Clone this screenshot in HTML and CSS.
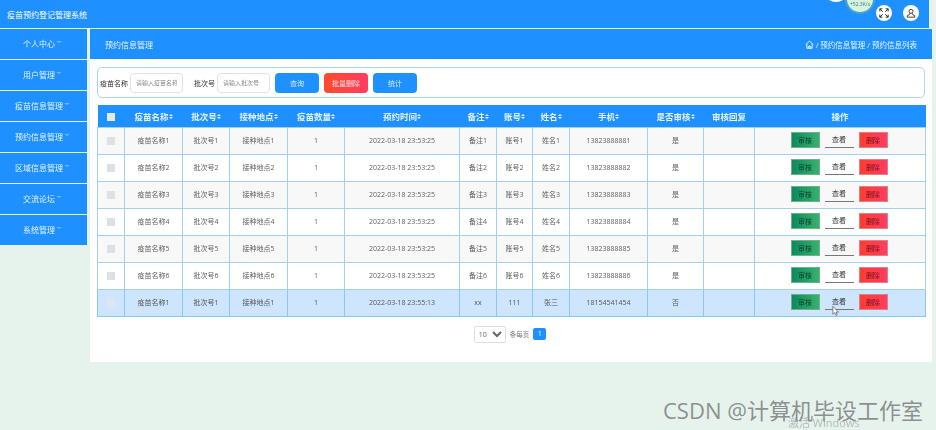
FILE: index.html
```html
<!DOCTYPE html>
<html lang="en">
<head>
    <meta charset="UTF-8">
    <meta name="viewport" content="width=device-width, initial-scale=1.0">
    <title>疫苗预约登记管理系统</title>
    <link rel="stylesheet" href="styles.css">
</head>
<body>
    <div class="app">
        <div class="topbar">
            <span class="brand">疫苗预约登记管理系统</span>
            <div class="top-icons">
                <span class="round-btn">
                    <svg viewBox="0 0 12 12" width="10" height="10"><path d="M1 1l3.5 3.5M1 1h3M1 1v3M11 1L7.5 4.5M11 1H8M11 1v3M1 11l3.5-3.5M1 11h3M1 11V8M11 11L7.5 7.5M11 11H8M11 11V8" fill="none" stroke="#333" stroke-width="1.2"/></svg>
                </span>
                <span class="round-btn">
                    <svg viewBox="0 0 12 12" width="10" height="10"><circle cx="6" cy="4" r="2.4" fill="none" stroke="#333" stroke-width="1.1"/><path d="M4.8 6.2L4 8 1.5 9.2V11h9V9.2L8 8l-.8-1.8" fill="none" stroke="#333" stroke-width="1.1"/></svg>
                </span>
            </div>
        </div>
        <div class="main">
            <ul class="sidebar">
                <li>个人中心<i class="caret"></i></li>
                <li>用户管理<i class="caret"></i></li>
                <li>疫苗信息管理<i class="caret"></i></li>
                <li>预约信息管理<i class="caret"></i></li>
                <li>区域信息管理<i class="caret"></i></li>
                <li>交流论坛<i class="caret"></i></li>
                <li>系统管理<i class="caret"></i></li>
            </ul>
            <div class="content">
                <div class="page-head">
                    <span class="page-title">预约信息管理</span>
                    <span class="crumbs">
                        <svg viewBox="0 0 12 12" width="9" height="9"><path d="M1 6l5-4.5L11 6M2.5 5.5V11h7V5.5M5 11V8h2v3" fill="none" stroke="#fff" stroke-width="1.2"/></svg>
                        / 预约信息管理 / 预约信息列表
                    </span>
                </div>
                <div class="panel">
                    <form class="search">
                        <label class="search-label">疫苗名称</label>
                        <input class="search-input" type="text" placeholder="请输入疫苗名称">
                        <label class="search-label second">批次号</label>
                        <input class="search-input" type="text" placeholder="请输入批次号">
                        <button class="btn btn-blue" type="button">查询</button>
                        <button class="btn btn-red" type="button">批量删除</button>
                        <button class="btn btn-blue" type="button">统计</button>
                    </form>
                    <table class="list">
                        <colgroup>
                            <col class="c-check"><col class="c-name"><col class="c-batch"><col class="c-place"><col class="c-count"><col class="c-time"><col class="c-note"><col class="c-acct"><col class="c-user"><col class="c-phone"><col class="c-state"><col class="c-reply"><col class="c-ops">
                        </colgroup>
                        <thead>
                            <tr>
                                <th><span class="check head-check"></span></th>
                                <th>疫苗名称<i class="sort"></i></th>
                                <th>批次号<i class="sort"></i></th>
                                <th>接种地点<i class="sort"></i></th>
                                <th>疫苗数量<i class="sort"></i></th>
                                <th>预约时间<i class="sort"></i></th>
                                <th>备注<i class="sort"></i></th>
                                <th>账号<i class="sort"></i></th>
                                <th>姓名<i class="sort"></i></th>
                                <th>手机<i class="sort"></i></th>
                                <th>是否审核<i class="sort"></i></th>
                                <th>审核回复</th>
                                <th>操作</th>
                            </tr>
                        </thead>
                        <tbody>
                            <tr>
                                <td><span class="check"></span></td><td>疫苗名称1</td><td>批次号1</td><td>接种地点1</td><td>1</td><td>2022-03-18 23:53:25</td><td>备注1</td><td>账号1</td><td>姓名1</td><td>13823888881</td><td>是</td><td></td>
                                <td><div class="ops"><span class="op op-green">审核</span><span class="op op-plain">查看</span><span class="op op-red">删除</span></div></td>
                            </tr>
                            <tr>
                                <td><span class="check"></span></td><td>疫苗名称2</td><td>批次号2</td><td>接种地点2</td><td>1</td><td>2022-03-18 23:53:25</td><td>备注2</td><td>账号2</td><td>姓名2</td><td>13823888882</td><td>是</td><td></td>
                                <td><div class="ops"><span class="op op-green">审核</span><span class="op op-plain">查看</span><span class="op op-red">删除</span></div></td>
                            </tr>
                            <tr>
                                <td><span class="check"></span></td><td>疫苗名称3</td><td>批次号3</td><td>接种地点3</td><td>1</td><td>2022-03-18 23:53:25</td><td>备注3</td><td>账号3</td><td>姓名3</td><td>13823888883</td><td>是</td><td></td>
                                <td><div class="ops"><span class="op op-green">审核</span><span class="op op-plain">查看</span><span class="op op-red">删除</span></div></td>
                            </tr>
                            <tr>
                                <td><span class="check"></span></td><td>疫苗名称4</td><td>批次号4</td><td>接种地点4</td><td>1</td><td>2022-03-18 23:53:25</td><td>备注4</td><td>账号4</td><td>姓名4</td><td>13823888884</td><td>是</td><td></td>
                                <td><div class="ops"><span class="op op-green">审核</span><span class="op op-plain">查看</span><span class="op op-red">删除</span></div></td>
                            </tr>
                            <tr>
                                <td><span class="check"></span></td><td>疫苗名称5</td><td>批次号5</td><td>接种地点5</td><td>1</td><td>2022-03-18 23:53:25</td><td>备注5</td><td>账号5</td><td>姓名5</td><td>13823888885</td><td>是</td><td></td>
                                <td><div class="ops"><span class="op op-green">审核</span><span class="op op-plain">查看</span><span class="op op-red">删除</span></div></td>
                            </tr>
                            <tr>
                                <td><span class="check"></span></td><td>疫苗名称6</td><td>批次号6</td><td>接种地点6</td><td>1</td><td>2022-03-18 23:53:25</td><td>备注6</td><td>账号6</td><td>姓名6</td><td>13823888886</td><td>是</td><td></td>
                                <td><div class="ops"><span class="op op-green">审核</span><span class="op op-plain">查看</span><span class="op op-red">删除</span></div></td>
                            </tr>
                            <tr class="active">
                                <td><span class="check"></span></td><td>疫苗名称1</td><td>批次号1</td><td>接种地点1</td><td>1</td><td>2022-03-18 23:55:13</td><td>xx</td><td>111</td><td>张三</td><td>18154541454</td><td>否</td><td></td>
                                <td><div class="ops"><span class="op op-green">审核</span><span class="op op-plain">查看</span><span class="op op-red">删除</span></div></td>
                            </tr>
                        </tbody>
                    </table>
                    <div class="pager">
                        <select class="page-size"><option>10</option></select>
                        <span class="page-text">条每页</span>
                        <span class="page-num">1</span>
                    </div>
                </div>
            </div>
        </div>
    </div>

    <!-- floating bits from the desktop on top of the page -->
    <div class="speed-small"></div>
    <div class="speed"><span>+52.3K/s</span></div>
    <svg class="cursor" viewBox="0 0 10 14" width="8" height="12"><path d="M1 1v10l2.5-2 1.5 3.5 1.6-.7L5 8.4h3.2z" fill="#fff" stroke="#445" stroke-width=".8"/></svg>
    <div class="watermark">CSDN @计算机毕设工作室</div>
    <div class="activate">激活 Windows</div>
</body>
</html>
```

FILE: styles.css
```css
* {
    box-sizing: border-box;
}
html, body {
    height: 100%;
}
body {
    margin: 0;
    background-color: #e6f2ec;
    font-family: "Open Sans", "Noto Sans CJK SC", sans-serif;
    overflow: hidden;
}
.app {
    filter: blur(0.5px);
}
.topbar {
    display: flex;
    justify-content: space-between;
    align-items: center;
    width: 929px;
    height: 28px;
    margin-bottom: 1px;
    padding: 0 10px 0 7px;
    background-color: #1e90ff;
    color: #fff;
}
.brand {
    font-size: 8px;
}
.top-icons {
    display: flex;
    gap: 11px;
    margin-bottom: 2px;
}
.round-btn {
    display: flex;
    justify-content: center;
    align-items: center;
    width: 16px;
    height: 16px;
    border-radius: 50%;
    background-color: #fff;
}
.main {
    display: flex;
    align-items: flex-start;
    gap: 3px;
}
.sidebar {
    width: 87px;
    margin: 0;
    padding: 0;
    list-style: none;
}
.sidebar li {
    display: flex;
    justify-content: center;
    align-items: center;
    height: 30px;
    margin-bottom: 1px;
    padding: 0 2px 2px 0;
    background-color: #1e90ff;
    color: #e4f1ff;
    font-size: 8px;
}
.caret {
    width: 0;
    height: 0;
    margin: 0 0 2px 1px;
    border-top: 2px solid #6fb6f7;
    border-left: 3px solid transparent;
    border-right: 3px solid transparent;
}
.content {
    width: 842px;
}
.page-head {
    display: flex;
    justify-content: space-between;
    align-items: center;
    height: 30px;
    padding: 0 15px;
    background-color: #1e90ff;
    color: #e8f3ff;
}
.page-title {
    font-size: 8px;
}
.crumbs {
    display: flex;
    align-items: center;
    gap: 2px;
    font-size: 7.5px;
}
.panel {
    height: 303px;
    padding: 8px 7px 0;
    background-color: #fff;
}
.search {
    display: flex;
    align-items: center;
    width: 828px;
    height: 31px;
    margin: 0 0 7px;
    padding: 0 2px;
    border: 1px solid #aed4ee;
    border-radius: 5px;
}
.search-label {
    margin-right: 2px;
    color: #333;
    font-size: 7px;
    white-space: nowrap;
}
.search-label.second {
    margin-left: 11px;
}
.search-input {
    width: 53px;
    height: 20px;
    padding: 0 5px;
    border: 1px solid #dfe3e8;
    border-radius: 4px;
    font-family: inherit;
    font-size: 6px;
}
.search-input::placeholder {
    color: #888;
}
.btn {
    width: 44px;
    height: 20px;
    margin-left: 5px;
    padding: 0;
    border: none;
    border-radius: 4px;
    color: #d8ebff;
    font-family: inherit;
    font-size: 7px;
}
.btn-blue {
    background-color: #1e90ff;
}
.btn-red {
    background: linear-gradient(90deg, #ff4a2e, #ff3d63);
    color: #ffe4e0;
}
.list {
    width: 828px;
    border-collapse: collapse;
    table-layout: fixed;
}
.c-check { width: 27px; }
.c-name { width: 58px; }
.c-batch { width: 47px; }
.c-place { width: 58px; }
.c-count { width: 57px; }
.c-time { width: 115px; }
.c-note { width: 37px; }
.c-acct { width: 36px; }
.c-user { width: 37px; }
.c-phone { width: 78px; }
.c-state { width: 56px; }
.c-reply { width: 51px; }
.c-ops { width: 171px; }
.list th {
    height: 22px;
    padding: 0;
    background-color: #1e90ff;
    color: #e6f2ff;
    font-size: 8.5px;
    font-weight: 700;
    text-align: center;
    white-space: nowrap;
}
.list td {
    height: 27px;
    padding: 0 0 1px;
    border: 1px solid #a4d0ee;
    color: #5f5f5f;
    font-size: 7px;
    text-align: center;
    white-space: nowrap;
}
.list tbody tr:nth-child(odd) td {
    background-color: #f8f8f8;
}
.list tbody tr.active td {
    border-color: #8cc6f3;
    background-color: #cde6fd;
    color: #555;
}
/* up and down arrows stacked */
.sort {
    display: inline-block;
    width: 4px;
    height: 6px;
    vertical-align: -0.5px;
}
.sort::before,
.sort::after {
    content: "";
    display: block;
    width: 0;
    height: 0;
    border-left: 2px solid transparent;
    border-right: 2px solid transparent;
}
.sort::before {
    margin-bottom: 1px;
    border-bottom: 2.5px solid #e6f2ff;
}
.sort::after {
    border-top: 2.5px solid #e6f2ff;
}
.check {
    display: inline-block;
    width: 8px;
    height: 8px;
    background-color: #dde1e6;
    vertical-align: middle;
}
.head-check {
    background-color: #e8e8e8;
}
.active .check {
    background-color: #dfe6ee;
}
.ops {
    display: flex;
    justify-content: center;
    gap: 5px;
    padding-right: 2px;
}
.op {
    width: 29px;
    height: 16px;
    color: #333;
    font-size: 7px;
    line-height: 15px;
    text-align: center;
}
.op-green {
    background: linear-gradient(90deg, #0d8a5f, #37b26c);
    border: 1px solid #6fae93;
    color: #0c3f2c;
}
.op-plain {
    border-bottom: 1px solid #777;
}
.op-red {
    background: linear-gradient(90deg, #ff3d2e, #ff3d63);
    border: 1px solid #d9828c;
    color: #6e1020;
}
.pager {
    display: flex;
    justify-content: center;
    align-items: center;
    gap: 4px;
    margin-top: 9px;
    padding-right: 2px;
}
.page-size {
    width: 32px;
    height: 17px;
    padding: 0;
    border: 1px solid #dcdfe6;
    border-radius: 2px;
    background-color: #fff;
    color: #666;
    font-family: inherit;
    font-size: 7px;
}
.page-text {
    color: #777;
    font-size: 6.5px;
}
.page-num {
    width: 13px;
    height: 12px;
    border-radius: 2px;
    background-color: #1e90ff;
    color: #fff;
    font-size: 6.5px;
    line-height: 12px;
    text-align: center;
}
.speed-small {
    position: absolute;
    top: -12px;
    left: 826px;
    width: 20px;
    height: 14px;
    border-radius: 50%;
    background-color: #fff;
}
.speed {
    position: absolute;
    top: -16px;
    left: 845px;
    width: 30px;
    height: 30px;
    padding-top: 15px;
    border: 2px solid #49a6c9;
    border-radius: 50%;
    background-color: #d6f3e2;
    color: #3a7a66;
    font-size: 5px;
    line-height: 7px;
    text-align: center;
    white-space: nowrap;
}
.cursor {
    position: absolute;
    top: 305px;
    left: 832px;
}
.watermark {
    position: absolute;
    top: 397px;
    left: 663px;
    color: rgba(100, 100, 100, 0.7);
    font-size: 22px;
    line-height: 26px;
    white-space: nowrap;
}
.activate {
    position: absolute;
    top: 416px;
    left: 788px;
    color: rgba(130, 130, 130, 0.5);
    font-size: 11px;
    line-height: 14px;
    white-space: nowrap;
}
```
